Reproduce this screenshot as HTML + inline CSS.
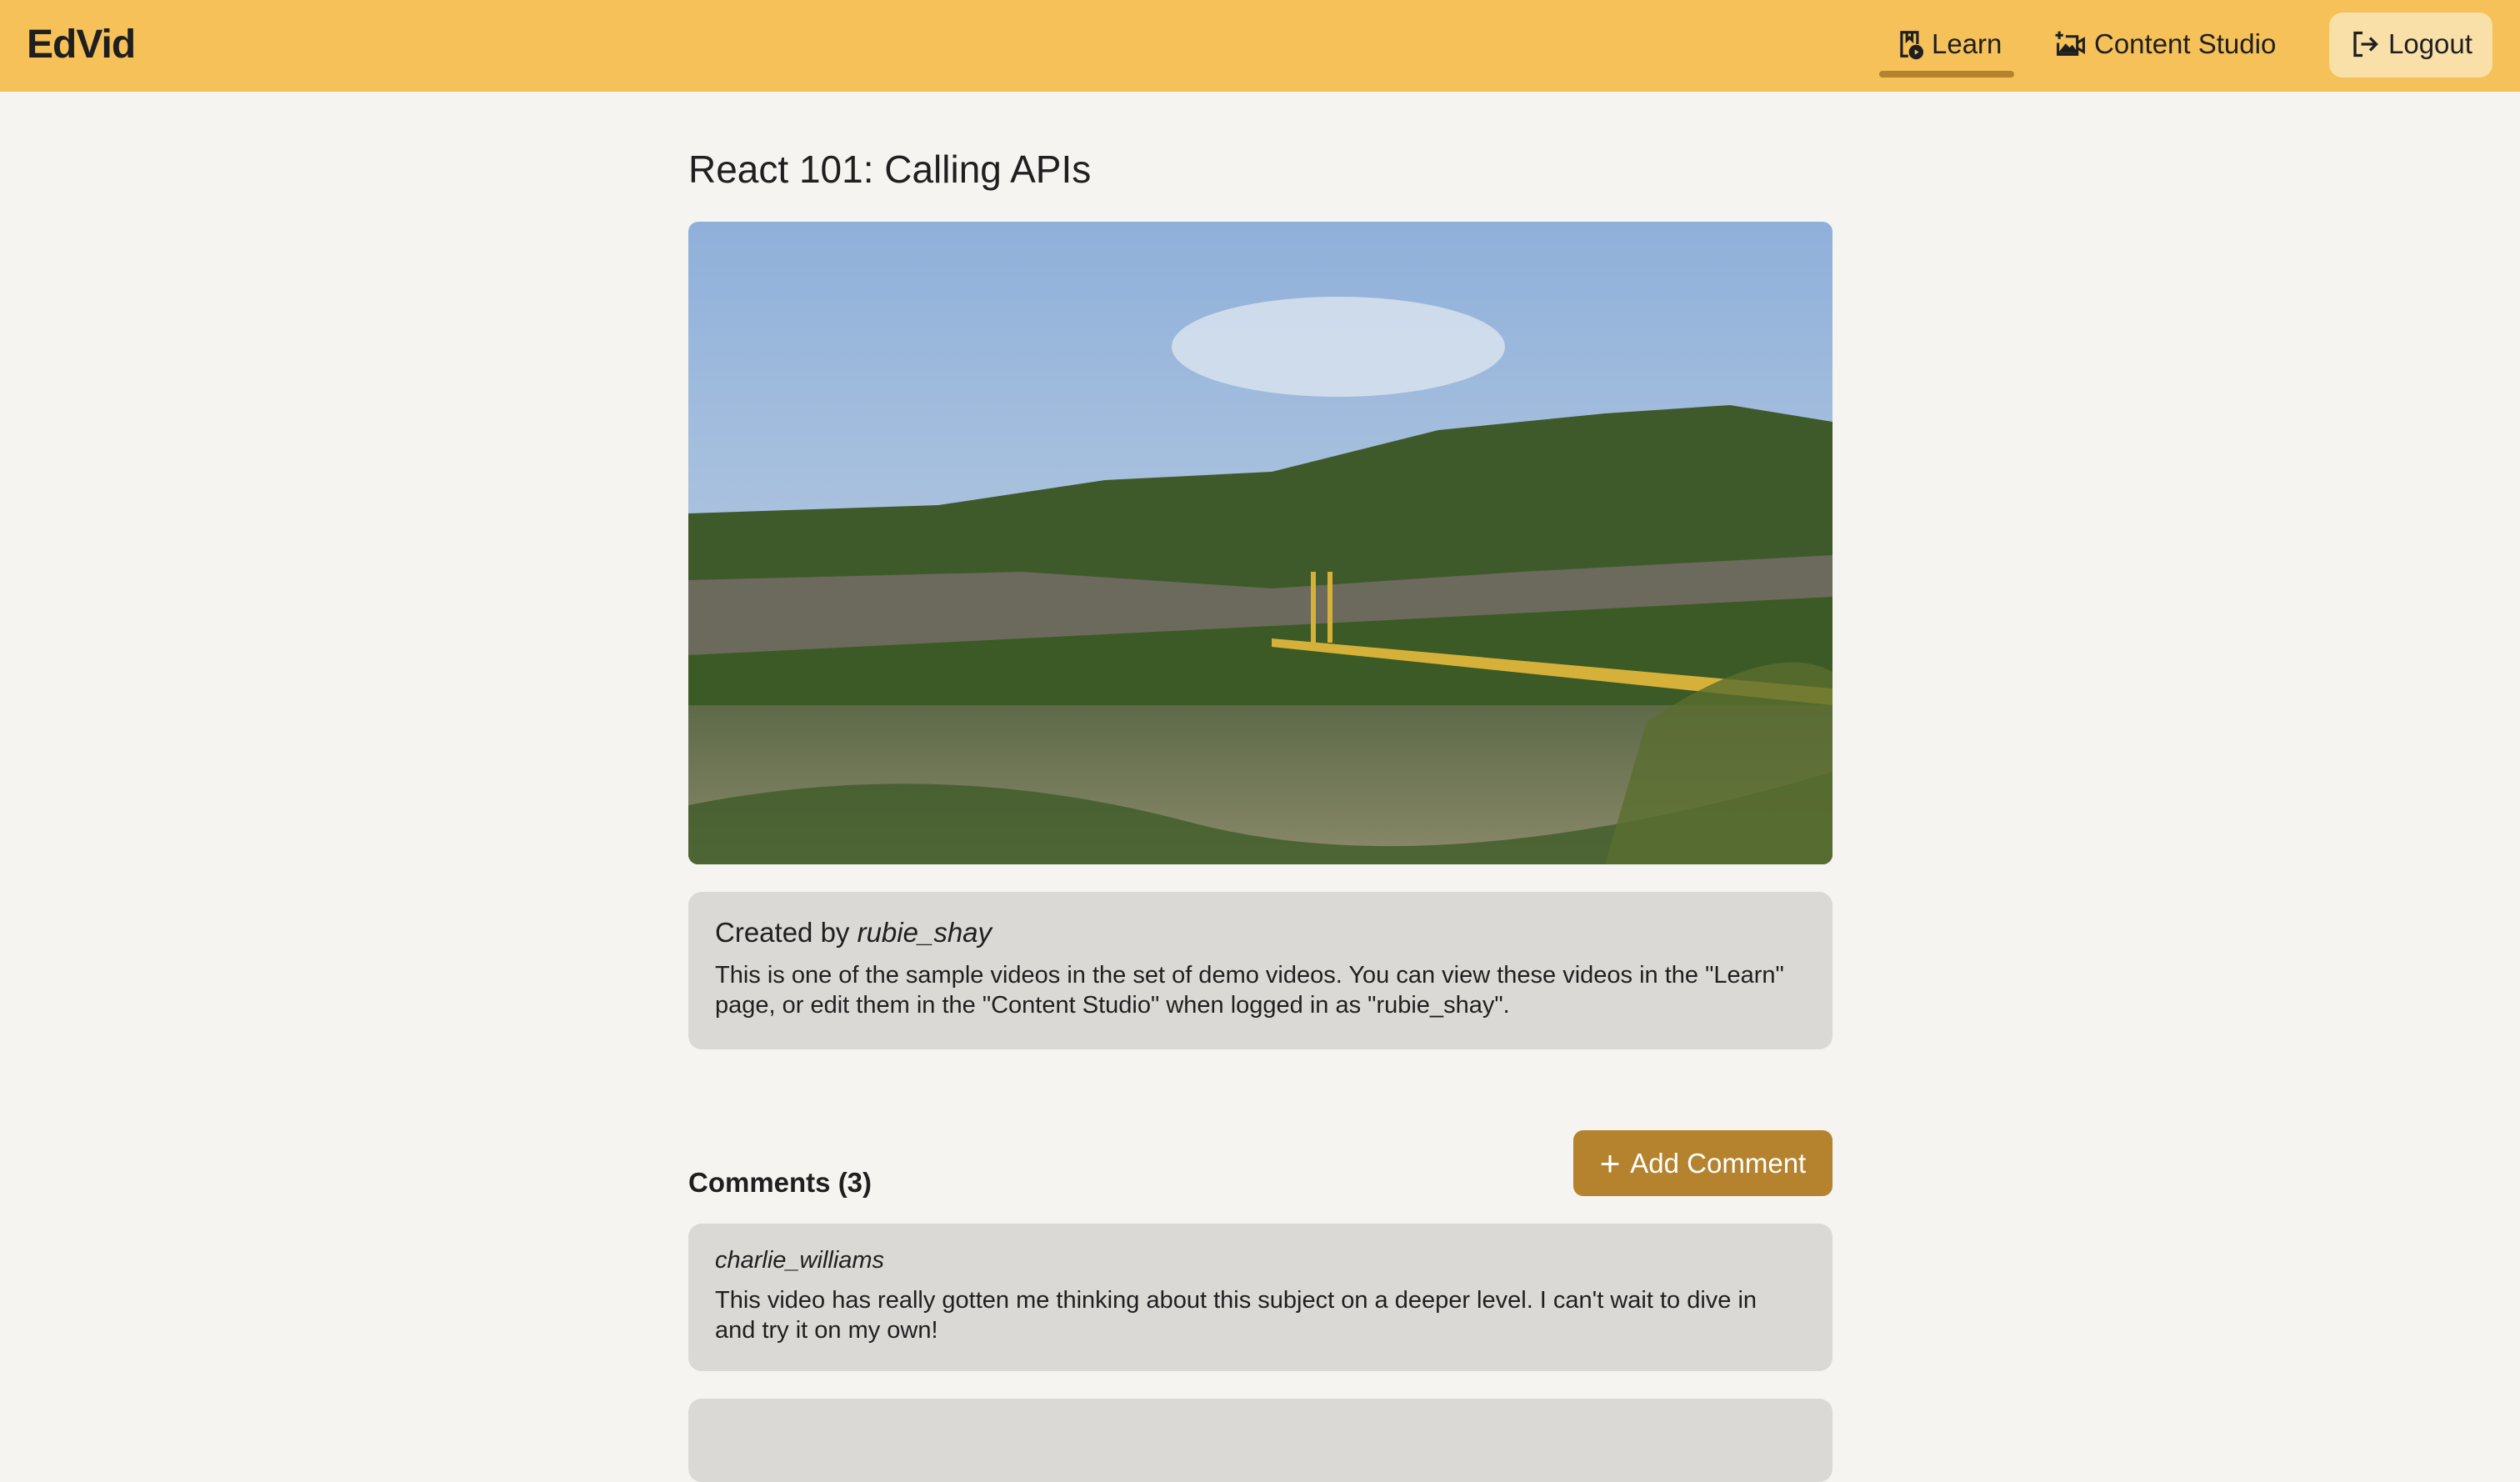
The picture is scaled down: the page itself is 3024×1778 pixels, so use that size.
<!DOCTYPE html>
<html><head><meta charset="utf-8"><style>
*{box-sizing:border-box;margin:0;padding:0}
body{width:3024px;height:1712px;overflow:hidden;background:#f5f4f0;font-family:"Liberation Sans",sans-serif;color:#1f1f1f}
.hdr{position:absolute;left:0;top:0;width:3024px;height:110px;background:#f5c158}
.logo{position:absolute;left:32px;top:26px;font-size:48px;font-weight:bold;letter-spacing:-1px}
.nav{position:absolute;top:34px;font-size:33px;display:flex;align-items:center}
.ul{position:absolute;left:2255px;top:85px;width:162px;height:8px;border-radius:4px;background:#b5822e}
.lo{position:absolute;left:2795px;top:15px;width:196px;height:78px;border-radius:16px;background:#f8e0a8}
.t{position:absolute;left:826px;top:176px;font-size:46px}
.vid{position:absolute;left:826px;top:266px;width:1373px;height:771px;border-radius:12px;overflow:hidden}
.box{position:absolute;left:826px;width:1373px;background:#dbd9d5;border-radius:16px;padding:0 32px}
.p{font-size:29px;line-height:36px}
.btn{position:absolute;left:1888px;top:1356px;width:311px;height:79px;border-radius:12px;background:#b5822e;color:#fff;font-size:33px;display:flex;align-items:center;justify-content:center}
</style></head><body>
<div class="hdr">
<div class="logo">EdVid</div>
<div class="nav" style="left:2274px"><svg width="38" height="38" viewBox="0 0 24 24" fill="none" stroke="#1f1f1f" stroke-width="2"><path d="M10 21H5V3h12v9"/><path d="M9 3v6l2-2 2 2V3"/><circle cx="16" cy="18" r="4.5" fill="#1f1f1f"/><path d="M15 16v4l3-2z" fill="#f5c158" stroke="none"/></svg><span style="margin-left:6px">Learn</span></div>
<div class="ul"></div>
<div class="nav" style="left:2465px"><svg width="40" height="38" viewBox="0 0 26 24" fill="none" stroke="#1f1f1f" stroke-width="2"><path d="M4 2v6M1 5h6"/><path d="M9 6h9v14H3V11"/><path d="M18 11l5-3v10l-5-3"/><path d="M5 18l4-5 3 3 2-2 3 4z" fill="#1f1f1f"/></svg><span style="margin-left:8px">Content Studio</span></div>
<div class="lo"></div>
<div class="nav" style="left:2820px"><svg width="36" height="36" viewBox="0 0 24 24" fill="none" stroke="#1f1f1f" stroke-width="2.2"><path d="M10 3H4v18h6"/><path d="M9 12h12M16 7l5 5-5 5"/></svg><span style="margin-left:10px">Logout</span></div>
</div>
<div class="t">React 101: Calling APIs</div>
<div class="vid"><svg width="1373" height="771" viewBox="0 0 1373 771" preserveAspectRatio="none">
<defs><linearGradient id="s" x1="0" y1="0" x2="0" y2="1"><stop offset="0" stop-color="#8fb0da"/><stop offset="1" stop-color="#c9d6e3"/></linearGradient>
<linearGradient id="w" x1="0" y1="0" x2="0" y2="1"><stop offset="0" stop-color="#5d6a48"/><stop offset="1" stop-color="#8a8a6a"/></linearGradient></defs>
<rect width="1373" height="771" fill="url(#s)"/>
<ellipse cx="780" cy="150" rx="200" ry="60" fill="#e4ebf2" opacity=".7"/>
<path d="M0 350 L300 340 L500 310 L700 300 L900 250 L1100 230 L1250 220 L1373 240 V771 H0Z" fill="#3f5a2a"/>
<path d="M0 430 L400 420 L700 440 L1000 420 L1373 400 V771 H0Z" fill="#6b6a5c"/>
<path d="M0 520 L400 500 L800 480 L1373 450 V771 H0Z" fill="#3c5a25"/>
<rect x="0" y="580" width="1373" height="191" fill="url(#w)"/>
<path d="M700 500 L1373 560 L1373 580 L700 510Z" fill="#d6b13a"/>
<path d="M750 420 V505 M770 420 V505" stroke="#d6b13a" stroke-width="6"/>
<path d="M0 700 Q300 640 600 720 T1373 660 V771 H0Z" fill="#3e5b28" opacity=".8"/>
<path d="M1150 600 Q1300 500 1373 540 V771 H1100Z" fill="#5a6e30" opacity=".8"/>
</svg></div>
<div class="box" style="top:1070px;height:189px;padding-top:30px">
<div style="font-size:33px">Created by <i>rubie_shay</i></div>
<div class="p" style="margin-top:14px">This is one of the sample videos in the set of demo videos. You can view these videos in the "Learn" page, or edit them in the "Content Studio" when logged in as "rubie_shay".</div></div>
<div class="btn"><span style="font-size:42px;margin-right:12px;line-height:1">+</span>Add Comment</div>
<div style="position:absolute;left:826px;top:1400px;font-size:33px;font-weight:bold">Comments (3)</div>
<div class="box" style="top:1468px;height:177px;padding-top:26px;padding-right:70px">
<div class="p" style="font-style:italic">charlie_williams</div>
<div class="p" style="margin-top:12px">This video has really gotten me thinking about this subject on a deeper level. I can't wait to dive in and try it on my own!</div></div>
<div class="box" style="top:1678px;height:100px"></div>
</body></html>
